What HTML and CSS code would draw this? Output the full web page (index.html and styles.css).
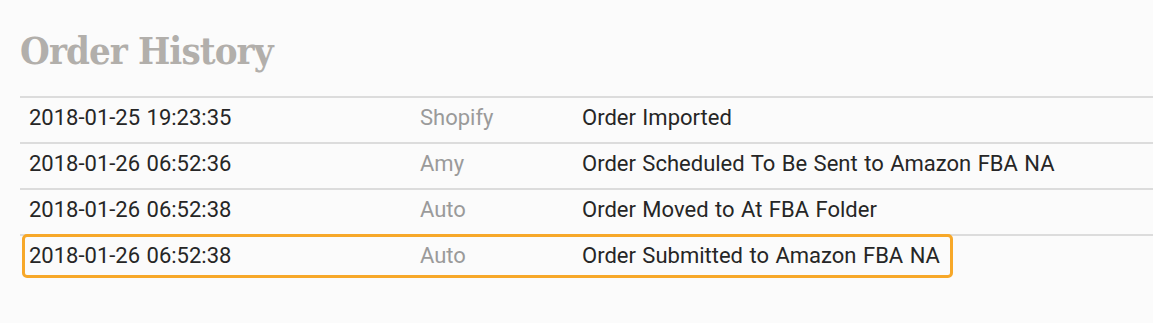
FILE: index.html
```html
<!DOCTYPE html>
<html>
<head>
<meta charset="utf-8">
<link rel="stylesheet" href="styles.css">
</head>
<body>
<div class="page">
  <h1 class="title">Order History</h1>
  <div class="history">
    <div class="row">
      <div class="cell time">2018-01-25 19:23:35</div>
      <div class="cell who">Shopify</div>
      <div class="cell what">Order Imported</div>
    </div>
    <div class="row">
      <div class="cell time">2018-01-26 06:52:36</div>
      <div class="cell who">Amy</div>
      <div class="cell what">Order Scheduled To Be Sent to Amazon FBA NA</div>
    </div>
    <div class="row">
      <div class="cell time">2018-01-26 06:52:38</div>
      <div class="cell who">Auto</div>
      <div class="cell what">Order Moved to At FBA Folder</div>
    </div>
    <div class="row row-highlighted">
      <div class="cell time">2018-01-26 06:52:38</div>
      <div class="cell who">Auto</div>
      <div class="cell what">Order Submitted to Amazon FBA NA</div>
      <div class="highlight"></div>
    </div>
  </div>
</div>
</body>
</html>
```

FILE: styles.css
```css
html, body {
  margin: 0;
  padding: 0;
}

body {
  background-color: #fbfbfb;
  font-family: Roboto, "Liberation Sans", sans-serif;
  color: #262626;
}

.page {
  padding: 28px 0 0 20px;
}

.title {
  margin: 0 0 22px 0;
  font-family: "DejaVu Serif Condensed", "DejaVu Serif", serif;
  font-stretch: condensed;
  font-weight: bold;
  font-size: 38px;
  line-height: 46px;
  color: #b2afab;
  letter-spacing: -0.9px;
}

.history {
  display: flex;
  flex-direction: column;
}

.row {
  position: relative;
  box-sizing: border-box;
  display: grid;
  grid-template-columns: 400px 162px 1fr;
  align-items: center;
  height: 46px;
  padding-bottom: 5px;
  border-top: 2px solid #dcdcdc;
  font-size: 22px;
  word-spacing: 1px;
}

.cell.time {
  padding-left: 9px;
}

.cell.who {
  color: #9a9a9a;
}

.highlight {
  position: absolute;
  left: 2px;
  top: -2px;
  width: 925px;
  height: 38px;
  border: 3px solid #f7a829;
  border-radius: 5px;
}
```
